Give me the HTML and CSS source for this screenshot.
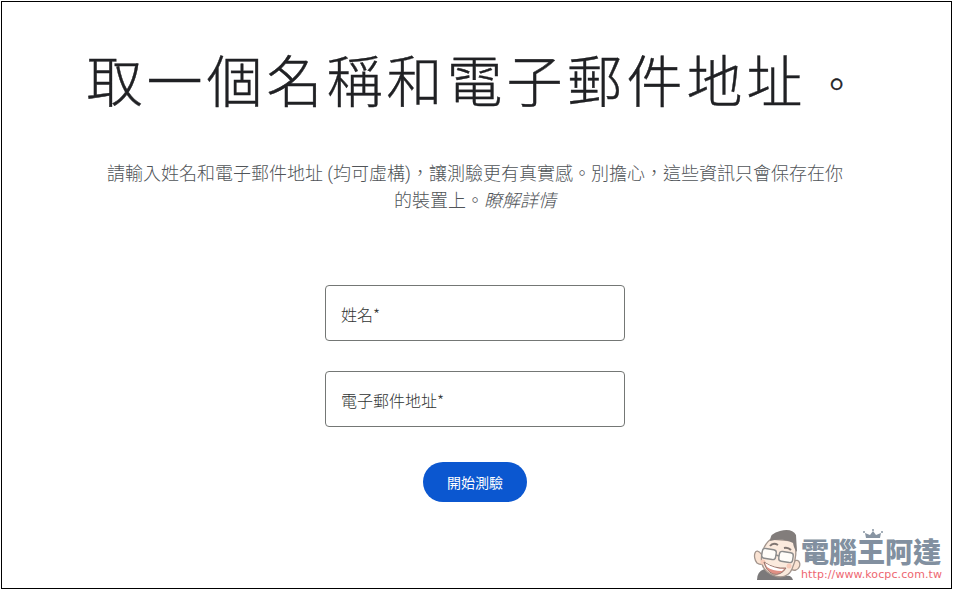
FILE: index.html
```html
<!DOCTYPE html>
<html lang="zh-Hant">
<head>
    <meta charset="UTF-8">
    <meta name="viewport" content="width=device-width, initial-scale=1.0">
    <title>取一個名稱和電子郵件地址</title>
    <link rel="stylesheet" href="styles.css">
</head>
<body>
    <main class="quiz-start">
        <h1>取一個名稱和電子郵件地址<span class="stop">。</span></h1>
        <p class="intro">請輸入姓名和電子郵件地址 (均可虛構)，讓測驗更有真實感。別擔心，這些資訊只會保存在你的裝置上。<a class="learn-more">瞭解詳情</a></p>

        <form class="quiz-form">
            <input type="text" name="name" placeholder="姓名*" required>
            <input type="text" name="email" placeholder="電子郵件地址*" required>
            <button type="submit">開始測驗</button>
        </form>
    </main>

    <!-- Watermark -->
    <div class="watermark">
        <svg class="mascot" width="50" height="54" viewBox="0 0 50 54">
            <path d="M4 52 Q4 43 12 41 L34 48 Q38 47 40 52Z" fill="#7b797a"/>
            <path d="M9 27 C2 17 -1 29 4 35 Q8 38 11 34 M39 34 C48 28 49 40 43 42 Q39 43 36 40" fill="#fae3d3" stroke="#a3958d" stroke-width="1.3"/>
            <path d="M18 11 C10 17 7 28 9 36 C12 48 33 55 39 41 C44 31 43 22 42 13Z" fill="#fbeadd" stroke="#a3958d" stroke-width="1.3"/>
            <path d="M17 13 Q17 5 27 3 Q39 0 43 7 L44 24 Q41 21 40 15 Q29 9 17 13Z" fill="#827d7b"/>
            <path d="M17 18 Q20 14 25 17 M31 20 Q35 19 38 22" fill="none" stroke="#807672" stroke-width="2"/>
            <g fill="#fffdf9" stroke="#8c8c8c" stroke-width="1.4">
                <rect x="9" y="21" width="14" height="10" rx="3" transform="rotate(9 16 26)"/>
                <rect x="26" y="24" width="14" height="10" rx="3" transform="rotate(9 33 29)"/>
                <path d="M23 27 L26 28" fill="none"/>
            </g>
            <circle cx="10" cy="34" r="2.5" fill="#f8cbb9"/>
            <circle cx="36" cy="38" r="2.5" fill="#f8cbb9"/>
            <path d="M11 34 Q21 41 33 40 Q28 48 20 46 Q13 43 11 34Z" fill="#e09084" stroke="#967a72"/>
            <path d="M12 35 Q22 41 31 41 L29 43 Q19 43 14 39Z" fill="#fff"/>
        </svg>
        <div class="brand">
            <svg class="crown" width="20" height="10" viewBox="0 0 20 10">
                <path d="M3 9 L2 4 L7 6 L10 2 L13 6 L18 4 L17 9Z" fill="#8794a2"/>
                <g fill="#8794a2"><circle cx="1" cy="3" r="1"/><circle cx="10" cy="1" r="1"/><circle cx="19" cy="3" r="1"/></g>
            </svg>
            <span class="brand-name">電腦王阿達</span>
            <span class="brand-url">http://www.kocpc.com.tw</span>
        </div>
    </div>
</body>
</html>
```

FILE: styles.css
```css
* {
    margin: 0;
    padding: 0;
    box-sizing: border-box;
}

body {
    height: 590px;
    padding: 1px;
    overflow: hidden;
    font-family: Roboto, "Noto Sans CJK TC", sans-serif;
    background-color: #fff;
}

.quiz-start {
    display: flex;
    flex-direction: column;
    align-items: center;
    width: 951px;
    height: 588px;
    padding: 43px 3px 0 0;
    border: 1px solid #000;
}

h1 {
    margin-left: 3px;
    font-size: 56px;
    font-weight: 300;
    line-height: 76px;
    letter-spacing: 4px;
    color: #202124;
    white-space: nowrap;
    -webkit-text-stroke: 0.4px #202124;
}

/* smaller full stop, same advance as the other characters */
.stop {
    display: inline-block;
    width: 60px;
    padding-left: 11px;
    font-size: 38px;
    line-height: 38px;
    letter-spacing: 0;
    vertical-align: 4px;
}

.intro {
    width: 740px;
    margin-top: 39px;
    font-size: 18px;
    font-weight: 300;
    line-height: 27px;
    text-align: center;
    color: #505458;
}

.learn-more {
    font-style: italic;
}

/* Form */
.quiz-form {
    display: flex;
    flex-direction: column;
    align-items: center;
    margin-top: 71px;
}

.quiz-form input {
    width: 300px;
    height: 56px;
    margin-bottom: 30px;
    padding: 1px 15px 0;
    border: 1px solid #747775;
    border-radius: 4px;
    font-family: "Noto Sans CJK TC", sans-serif;
    font-size: 16px;
    font-weight: 300;
}

.quiz-form input::placeholder {
    color: #303332;
}

.quiz-form button {
    width: 104px;
    height: 40px;
    margin-top: 5px;
    border: none;
    border-radius: 20px;
    font-family: inherit;
    font-size: 14px;
    font-weight: 400;
    color: #fff;
    background-color: #0b57d0;
    cursor: pointer;
}

/* Watermark */
.watermark {
    position: absolute;
    left: 753px;
    top: 528px;
    display: flex;
}

.brand {
    position: relative;
    display: flex;
    flex-direction: column;
    margin-left: -2px;
    padding-top: 11px;
}

.brand-name {
    font-size: 28px;
    font-weight: 900;
    line-height: 29px;
    color: #8290a0;
}

.brand-url {
    font-family: "DejaVu Sans", Verdana, sans-serif;
    font-size: 11px;
    line-height: 14px;
    letter-spacing: 0.1px;
    color: #ee6670;
}

.crown {
    position: absolute;
    left: 62px;
    top: 1px;
}
```
